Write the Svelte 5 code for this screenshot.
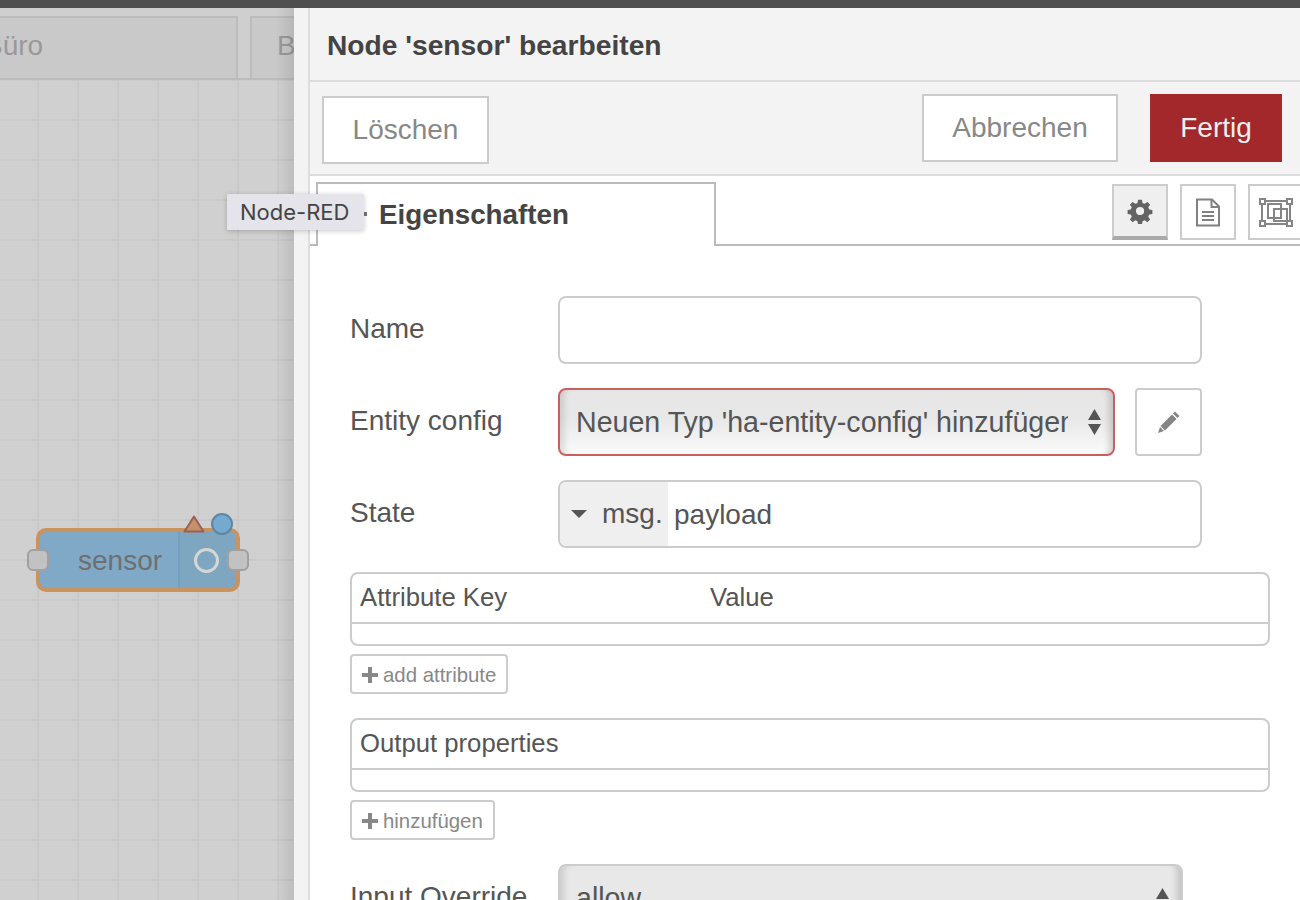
<script lang="ts">
    const gridRows = [
        { label: "Name", kind: "input" },
    ];
</script>

<div class="screen">
    <div class="topbar"></div>
    <div class="workspace">
        <section class="canvas">
            <div class="flow-tabs">
                <div class="flow-tab first"><span>Büro</span></div>
                <div class="flow-tab second"><span>B</span></div>
            </div>
            <div class="grid"></div>

            <div class="node">
                <span class="port left"></span>
                <span class="node-label">sensor</span>
                <span class="node-icon"><span class="ring"></span></span>
                <span class="port right"></span>
                <svg class="warn" viewBox="0 0 22 18" aria-hidden="true">
                    <path d="M11 1.5 L20.5 16.5 H1.5 Z" fill="#c6906a" stroke="#9c5f55" stroke-width="2" stroke-linejoin="round" />
                </svg>
                <span class="changed"></span>
            </div>
        </section>

        <div class="resizer"></div>

        <main class="panel">
            <header class="title">Node 'sensor' bearbeiten</header>

            <div class="toolbar">
                <button class="btn delete">Löschen</button>
                <div class="spacer"></div>
                <button class="btn cancel">Abbrechen</button>
                <button class="btn done">Fertig</button>
            </div>

            <div class="tabbar">
                <div class="tab"><span class="tab-mark"></span>Eigenschaften</div>
                <div class="tab-fill">
                    <button class="icon-btn active" aria-label="Eigenschaften">
                        <svg viewBox="0 0 24 24" width="26" height="26"><path fill="#636363" d="M10.2 1.5h3.6l.5 3a7.6 7.6 0 0 1 2 .85l2.5-1.75 2.55 2.55-1.75 2.5c.37.63.66 1.3.85 2l3 .5v3.6l-3 .5a7.6 7.6 0 0 1-.85 2l1.75 2.5-2.55 2.55-2.5-1.75a7.6 7.6 0 0 1-2 .85l-.5 3h-3.6l-.5-3a7.6 7.6 0 0 1-2-.85l-2.5 1.75-2.55-2.55 1.75-2.5a7.6 7.6 0 0 1-.85-2l-3-.5v-3.6l3-.5c.19-.7.48-1.37.85-2L2.650 6.150 5.200 3.600l2.500 1.750a7.600 7.600 0 0 1 2-.85zM12 8.200a3.800 3.800 0 1 0 0 7.600 3.800 3.800 0 0 0 0-7.600z"/></svg>
                    </button>
                    <button class="icon-btn" aria-label="Beschreibung">
                        <svg viewBox="0 0 26 29" width="26" height="29" fill="none" stroke="#808080" stroke-width="2"><path d="M2 1.500h15l7 7V27.500H2z"/><path d="M16.500 1.500v7.500h7.500"/><path d="M7 14h12M7 18h12M7 22h12"/></svg>
                    </button>
                    <button class="icon-btn" aria-label="Darstellung">
                        <svg viewBox="0 0 34 29" width="34" height="29" fill="none" stroke="#858585" stroke-width="2"><rect x="3" y="3" width="28" height="23"/><rect x="9" y="6" width="13" height="14"/><rect x="15" y="11" width="13" height="12"/><g fill="#fff"><rect x="1" y="1" width="5" height="5"/><rect x="28" y="1" width="5" height="5"/><rect x="1" y="23" width="5" height="5"/><rect x="28" y="23" width="5" height="5"/></g></svg>
                    </button>
                </div>
            </div>

            <form class="form">
                {#each gridRows as row}
                    <div class="row">
                        <span class="label">{row.label}</span>
                        <div class="field wide"></div>
                    </div>
                {/each}

                <div class="row">
                    <span class="label">Entity config</span>
                    <div class="select invalid">
                        <span class="select-text">Neuen Typ 'ha-entity-config' hinzufügen</span>
                        <svg class="updown" viewBox="0 0 13 26" width="13" height="26"><path fill="#555" d="M6.500 0L13 11H0zM6.500 26L13 15H0z"/></svg>
                    </div>
                    <button class="edit" type="button" aria-label="Bearbeiten">
                        <svg viewBox="0 0 22 22" width="22" height="22"><path fill="#858585" d="M17 .500L21.500 5l-2 2L15 2.500zM14 3.500L18.500 8 7 19.500 2.500 15zM2 16l4 4-6 2z"/></svg>
                    </button>
                </div>

                <div class="row">
                    <span class="label">State</span>
                    <div class="typed wide">
                        <span class="type-pick"><i class="caret"></i>msg.</span>
                        <span class="type-value">payload</span>
                    </div>
                </div>

                <div class="block">
                    <div class="list">
                        <div class="list-head"><span class="col-key">Attribute Key</span><span>Value</span></div>
                        <div class="list-body"></div>
                    </div>
                    <button class="add" type="button">
                        <svg viewBox="0 0 16 16" width="16" height="16"><path fill="#888" d="M6 0h4v6h6v4h-6v6H6v-6H0V6h6z"/></svg>add attribute
                    </button>
                </div>

                <div class="block">
                    <div class="list">
                        <div class="list-head"><span>Output properties</span></div>
                        <div class="list-body"></div>
                    </div>
                    <button class="add" type="button">
                        <svg viewBox="0 0 16 16" width="16" height="16"><path fill="#888" d="M6 0h4v6h6v4h-6v6H6v-6H0V6h6z"/></svg>hinzufügen
                    </button>
                </div>

                <div class="row">
                    <span class="label">Input Override</span>
                    <div class="select override">
                        <span class="select-text">allow</span>
                        <svg class="up" viewBox="0 0 13 11" width="13" height="11"><path fill="#555" d="M6.500 0L13 11H0z"/></svg>
                    </div>
                </div>
            </form>
        </main>
    </div>

    <div class="tooltip">Node-RED</div>
</div>

<style>
    :global(body) {
        margin: 0;
        background: #fff;
    }

    .screen {
        position: relative;
        display: flex;
        flex-direction: column;
        width: 1300px;
        height: 900px;
        overflow: hidden;
        font-family: "Liberation Sans", Arial, sans-serif;
        color: #555;
    }

    .topbar {
        flex: none;
        height: 8px;
        background: #4f4f4f;
    }

    .workspace {
        display: flex;
        flex: 1;
        min-height: 0;
    }

    .canvas {
        position: relative;
        display: flex;
        flex-direction: column;
        flex: none;
        width: 294px;
        background: #d0d0d0;
        overflow: hidden;
    }

    .canvas::after {
        content: "";
        position: absolute;
        inset: 0 0 0 auto;
        width: 18px;
        background: linear-gradient(to right, rgba(0, 0, 0, 0), rgba(0, 0, 0, 0.09));
    }

    .flow-tabs {
        display: flex;
        flex: none;
        gap: 12px;
        height: 62px;
        padding: 8px 0 0;
        margin-left: -20px;
        background: #cfcfcf;
        border-bottom: 2px solid #bcbcbc;
    }

    .flow-tab {
        flex: none;
        display: flex;
        align-items: center;
        box-sizing: border-box;
        padding-bottom: 4px;
        border: 2px solid #bcbcbc;
        border-bottom: none;
        background: #c9c9c9;
        color: #999;
        font-size: 28px;
    }

    .flow-tab.first {
        width: 258px;
        padding-left: 2px;
    }

    .flow-tab.second {
        width: 80px;
        padding-left: 25px;
    }

    .grid {
        flex: 1;
        background-color: #d0d0d0;
        background-image:
            linear-gradient(to right, #c9c9c9 2px, transparent 2px),
            linear-gradient(to bottom, #c9c9c9 2px, transparent 2px);
        background-size: 40px 40px;
        background-position: 37px 39px;
    }

    .node {
        position: absolute;
        left: 36px;
        top: 520px;
        display: flex;
        align-items: center;
        box-sizing: border-box;
        width: 204px;
        height: 64px;
        background: #7fa9c6;
        border: 4px solid #c9925f;
        border-radius: 10px;
    }

    .node-label {
        flex: 1;
        padding: 2px 0 0 38px;
        font-size: 28px;
        line-height: 1;
        color: #6f6f6f;
    }

    .node-icon {
        display: flex;
        align-items: center;
        justify-content: center;
        align-self: stretch;
        box-sizing: border-box;
        width: 58px;
        padding-right: 3px;
        border-left: 2px solid #74a0bd;
        background: #7fa6c0;
        border-radius: 0 6px 6px 0;
    }

    .ring {
        width: 19px;
        height: 19px;
        border: 3px solid #d6d6d6;
        border-radius: 50%;
    }

    .port {
        position: absolute;
        top: 17px;
        box-sizing: border-box;
        width: 22px;
        height: 22px;
        background: #c2c2c2;
        border: 2px solid #a0a0a0;
        border-radius: 6px;
    }

    .port.left {
        left: -13px;
    }

    .port.right {
        right: -13px;
    }

    .warn {
        position: absolute;
        left: 143px;
        top: -17px;
        width: 22px;
        height: 18px;
    }

    .changed {
        position: absolute;
        left: 171px;
        top: -19px;
        box-sizing: border-box;
        width: 22px;
        height: 22px;
        background: #74a9d0;
        border: 2px solid #5f86a3;
        border-radius: 50%;
    }

    .resizer {
        flex: none;
        box-sizing: border-box;
        width: 16px;
        background: #f3f3f3;
        border-right: 2px solid #ddd;
    }

    .panel {
        display: flex;
        flex-direction: column;
        flex: 1;
        min-width: 0;
        background: #fff;
    }

    .title {
        flex: none;
        box-sizing: border-box;
        height: 74px;
        padding: 20px 0 0 17px;
        background: #f3f3f3;
        border-bottom: 2px solid #ddd;
        font-size: 28.2px;
        font-weight: 700;
        line-height: 34px;
        color: #444;
    }

    .toolbar {
        display: flex;
        flex: none;
        align-items: flex-start;
        box-sizing: border-box;
        height: 94px;
        padding: 12px 18px 0 12px;
        background: #f3f3f3;
        border-bottom: 2px solid #ddd;
    }

    .spacer {
        flex: 1;
    }

    .btn {
        box-sizing: border-box;
        height: 68px;
        border: 2px solid #ccc;
        background: #fff;
        font: inherit;
        font-size: 28px;
        color: #888;
        padding: 0;
    }

    .delete {
        width: 167px;
        margin-top: 2px;
    }

    .cancel {
        width: 196px;
        margin-right: 32px;
    }

    .done {
        width: 132px;
        border: none;
        background: #a2282b;
        color: #eee;
    }

    .tabbar {
        display: flex;
        flex: none;
        box-sizing: border-box;
        height: 70px;
        padding: 6px 0 0 6px;
        background: #fff;
        border-bottom: 2px solid #bbb;
    }

    .tab {
        position: relative;
        display: flex;
        align-items: center;
        flex: none;
        box-sizing: border-box;
        width: 400px;
        height: 64px;
        padding: 0 0 0 61px;
        margin-bottom: -2px;
        border: 2px solid #bbb;
        border-bottom: none;
        background: #fff;
        font-size: 27.8px;
        font-weight: 700;
        color: #444;
    }

    .tab-mark {
        position: absolute;
        left: 46px;
        top: 28px;
        width: 3px;
        height: 4px;
        background: #777;
    }

    .tab-fill {
        flex: 1;
        display: flex;
        gap: 12px;
        padding: 2px 0 0 396px;
    }

    .icon-btn {
        flex: none;
        display: flex;
        align-items: center;
        justify-content: center;
        box-sizing: border-box;
        width: 56px;
        height: 56px;
        padding: 0;
        border: 2px solid #ccc;
        background: #fff;
    }

    .icon-btn.active {
        background: #efefef;
        border-bottom: 4px solid #aaa;
    }

    .form {
        display: flex;
        flex-direction: column;
        gap: 24px;
        padding: 50px 0 0 40px;
        margin-right: 30px;
    }

    .row {
        display: flex;
        flex: none;
        align-items: flex-start;
    }

    .label {
        flex: none;
        width: 208px;
        padding-top: 16px;
        font-size: 28px;
        line-height: 34px;
        color: #555;
    }

    .wide {
        width: 644px;
    }

    .field {
        box-sizing: border-box;
        height: 68px;
        border: 2px solid #ccc;
        border-radius: 8px;
        background: #fff;
    }

    .select {
        position: relative;
        display: flex;
        align-items: center;
        box-sizing: border-box;
        height: 68px;
        padding: 0 12px 0 16px;
        border: 2px solid #ccc;
        border-radius: 8px;
        background: linear-gradient(to bottom, #e6e6e6 0, #e8e8e8 45%, #fafafa 100%);
        box-shadow: inset -9px 0 6px -5px rgba(0, 0, 0, 0.16), inset 9px 0 6px -5px rgba(0, 0, 0, 0.12);
        font-size: 28.6px;
        color: #555;
    }

    .select.invalid {
        width: 557px;
        border-color: #c96060;
    }

    .select-text {
        flex: 1;
        overflow: hidden;
        white-space: nowrap;
        min-width: 0;
    }

    .updown {
        flex: none;
        margin-left: 20px;
    }

    .edit {
        display: flex;
        align-items: center;
        justify-content: center;
        box-sizing: border-box;
        width: 67px;
        height: 68px;
        margin-left: 20px;
        padding: 0;
        border: 2px solid #ccc;
        border-radius: 4px;
        background: #fff;
    }

    .typed {
        display: flex;
        align-items: stretch;
        box-sizing: border-box;
        height: 68px;
        border: 2px solid #ccc;
        border-radius: 8px;
        background: #fff;
        overflow: hidden;
        font-size: 28px;
    }

    .type-pick {
        display: flex;
        align-items: center;
        box-sizing: border-box;
        flex: none;
        width: 108px;
        padding-left: 11px;
        background: #efefef;
    }

    .caret {
        width: 0;
        height: 0;
        margin-right: 15px;
        border-style: solid;
        border-width: 8px 8px 0;
        border-color: #555 transparent transparent;
    }

    .type-value {
        display: flex;
        align-items: center;
        padding: 2px 0 0 6px;
    }

    .block {
        display: flex;
        flex-direction: column;
        align-items: flex-start;
        gap: 8px;
    }

    .list {
        box-sizing: border-box;
        width: 920px;
        height: 74px;
        border: 2px solid #ccc;
        border-radius: 8px;
        background: #fff;
    }

    .list-head {
        display: flex;
        box-sizing: border-box;
        height: 50px;
        padding: 7px 0 0 8px;
        border-bottom: 2px solid #ccc;
        font-size: 25.7px;
        line-height: 32px;
    }

    .col-key {
        width: 350px;
    }

    .add {
        display: flex;
        align-items: center;
        gap: 5px;
        box-sizing: border-box;
        height: 40px;
        padding: 2px 10px 0;
        border: 2px solid #ccc;
        border-radius: 4px;
        background: #fff;
        font: inherit;
        font-size: 20.4px;
        color: #888;
    }

    .select.override {
        width: 625px;
        padding: 0 12px 0 16px;
        background: #e8e8e8;
    }

    .up {
        flex: none;
        margin-bottom: 10px;
    }

    .tooltip {
        position: absolute;
        left: 227px;
        top: 194px;
        padding: 0 15px 0 13px;
        height: 36px;
        line-height: 36px;
        background: #e4e4ea;
        box-shadow: 0 1px 5px rgba(0, 0, 0, 0.22);
        font-family: "Inter", "Liberation Sans", sans-serif;
        font-size: 22px;
        color: #444;
        border-radius: 1px;
    }
</style>
